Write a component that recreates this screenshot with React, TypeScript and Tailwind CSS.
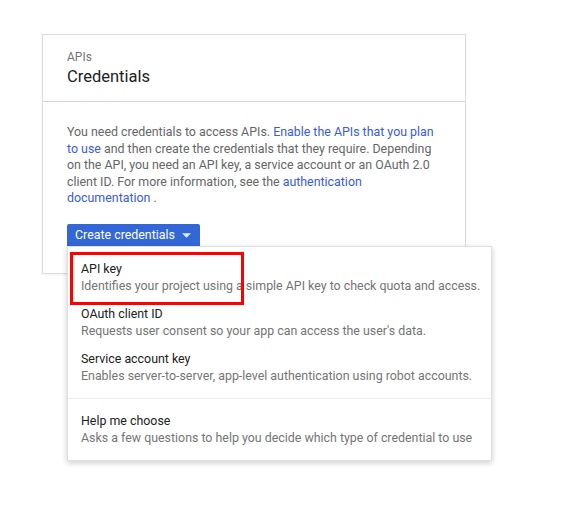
import React from "react";

const menuItems = [
  {
    title: "API key",
    desc: "Identifies your project using a simple API key to check quota and access.",
  },
  {
    title: "OAuth client ID",
    desc: "Requests user consent so your app can access the user's data.",
  },
  {
    title: "Service account key",
    desc: "Enables server-to-server, app-level authentication using robot accounts.",
  },
];

const MenuItem: React.FC<{ title: string; desc: string }> = ({ title, desc }) => (
  <div className="px-[13px] py-[6px] leading-[16.5px] whitespace-nowrap">
    <div className="text-[12.4px] text-[#212121]">{title}</div>
    <div className="text-[12.4px] text-[#757575]">{desc}</div>
  </div>
);

const App: React.FC = () => {
  return (
    <div
      className="relative w-[566px] h-[514px] bg-white pl-[42px] pt-[34px]"
      style={{ fontFamily: "Roboto, 'Liberation Sans', sans-serif" }}
    >
      {/* 카드 */}
      <div className="w-[424px] border border-[#dcdcdc] bg-white shadow-[0_1px_2px_rgba(0,0,0,0.06)]">
        <div className="h-[67px] border-b border-[#d6d6d6] pl-[24px] pt-[14px]">
          <div className="text-[12px] leading-[16px] text-[#757575]">APIs</div>
          <div className="text-[16.5px] leading-[24px] text-[#212121]">Credentials</div>
        </div>
        <div className="pl-[24px] pr-[26px] pt-[22px] pb-[25px]">
          <p className="text-[12.4px] leading-[16.5px] text-[#666666]">
            You need credentials to access APIs.{" "}
            <span className="text-[#3b5bdb]">Enable the APIs that you plan to use</span> and then
            create the credentials that they require. Depending on the API, you need an API key, a
            service account or an OAuth 2.0 client ID. For more information, see the{" "}
            <span className="text-[#3b5bdb]">authentication documentation</span> .
          </p>
          <div className="relative mt-[17px] w-fit">
            <button className="flex items-center h-[24px] pl-[8px] pr-[6px] bg-[#3367d6] text-white text-[12.4px] rounded-[2px]">
              Create credentials
              <svg width="9" height="5" viewBox="0 0 10 5" className="ml-[7px] mr-[3px]">
                <path d="M0 0 L10 0 L5 5 Z" fill="#dfe7fb" />
              </svg>
            </button>
          </div>
        </div>
      </div>

      {/* 드롭다운 메뉴 */}
      <div className="absolute left-[67px] top-[246px] w-[425px] bg-white border border-[#e0e0e0] shadow-[0_2px_6px_rgba(0,0,0,0.2)]">
        <div className="py-[8px]">
          {menuItems.map((item) => (
            <MenuItem key={item.title} title={item.title} desc={item.desc} />
          ))}
        </div>
        <div className="border-t border-[#ececec] py-[8px]">
          <MenuItem
            title="Help me choose"
            desc="Asks a few questions to help you decide which type of credential to use"
          />
        </div>
      </div>

      {/* 강조 표시 */}
      <div className="absolute left-[70px] top-[252px] w-[174px] h-[53px] border-[3px] border-[#ff0000]" />
    </div>
  );
};

export default App;
